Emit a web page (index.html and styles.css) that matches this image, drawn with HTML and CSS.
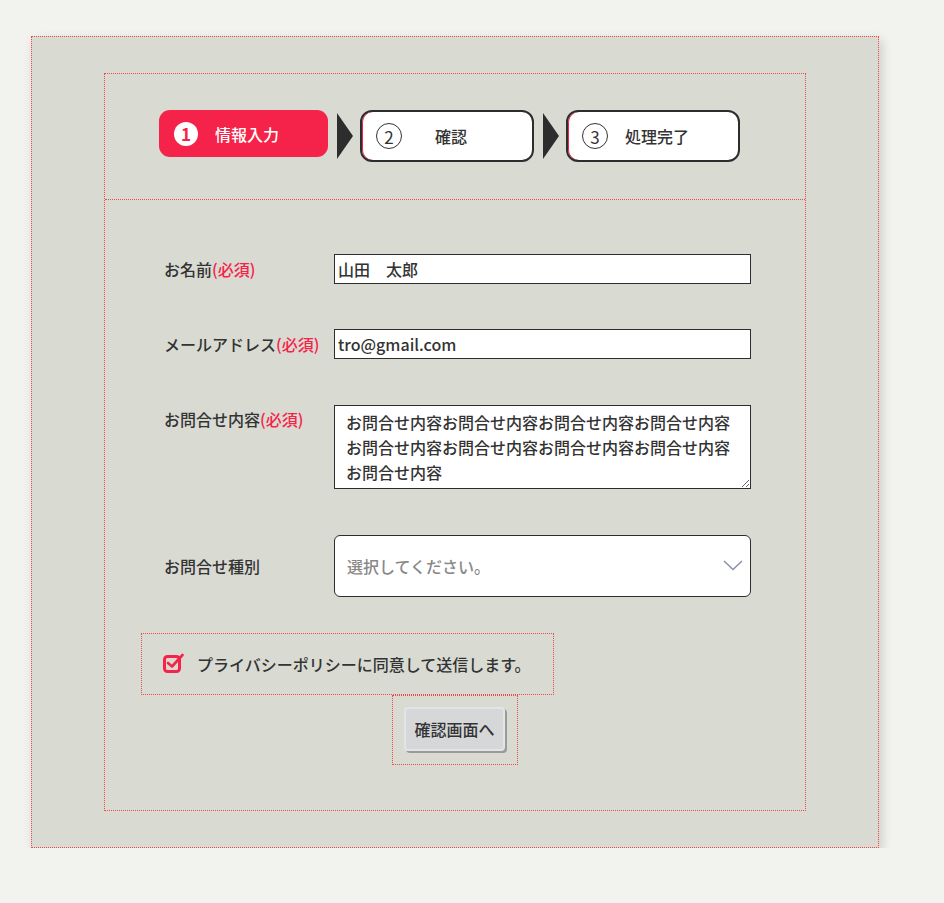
FILE: index.html
```html
<!DOCTYPE html>
<html lang="ja">
<head>
    <meta charset="UTF-8">
    <meta name="viewport" content="width=device-width, initial-scale=1.0">
    <title>お問合せ</title>
    <link rel="stylesheet" href="styles.css">
</head>
<body>
    <div class="page">
        <div class="contact">
            <div class="steps">
                <div class="step step-current">
                    <span class="step-num">1</span>
                    <span class="step-name">情報入力</span>
                </div>
                <span class="step-arrow"></span>
                <div class="step">
                    <span class="step-num">2</span>
                    <span class="step-name">確認</span>
                </div>
                <span class="step-arrow"></span>
                <div class="step">
                    <span class="step-num">3</span>
                    <span class="step-name">処理完了</span>
                </div>
            </div>

            <form class="contact-form" id="contactForm">
                <div class="form-row">
                    <label class="form-label" for="name">お名前<span class="required">(必須)</span></label>
                    <input class="form-input" type="text" id="name" name="name" value="山田　太郎">
                </div>

                <div class="form-row">
                    <label class="form-label" for="email">メールアドレス<span class="required">(必須)</span></label>
                    <input class="form-input" type="email" id="email" name="email" value="tro@gmail.com">
                </div>

                <div class="form-row form-row-top">
                    <label class="form-label" for="message">お問合せ内容<span class="required">(必須)</span></label>
                    <textarea class="form-textarea" id="message" name="message">お問合せ内容お問合せ内容お問合せ内容お問合せ内容お問合せ内容お問合せ内容お問合せ内容お問合せ内容お問合せ内容</textarea>
                </div>

                <div class="form-row form-row-select">
                    <label class="form-label" for="type">お問合せ種別</label>
                    <div class="select-wrap">
                        <select class="form-select" id="type" name="type">
                            <option value="">選択してください。</option>
                            <option value="service">サービスについて</option>
                            <option value="recruit">採用について</option>
                            <option value="other">その他</option>
                        </select>
                        <svg class="select-arrow" width="20" height="11" viewBox="0 0 20 11">
                            <path d="M1 1 L10 9.5 L19 1" fill="none" stroke="#8b93aa" stroke-width="1.6"/>
                        </svg>
                    </div>
                </div>

                <label class="agree">
                    <input class="agree-input" type="checkbox" name="agree" checked>
                    <svg class="agree-icon" width="22" height="20" viewBox="0 0 22 20">
                        <rect x="1.5" y="3.5" width="15" height="15" rx="3" fill="none" stroke="#f52349" stroke-width="3"/>
                        <path d="M5 10 L9 13.5 L19.5 2" fill="none" stroke="#f52349" stroke-width="2.6" stroke-linecap="round" stroke-linejoin="round"/>
                    </svg>
                    <span>プライバシーポリシーに同意して送信します。</span>
                </label>

                <div class="submit-area">
                    <button type="submit" class="btn-confirm">確認画面へ</button>
                </div>
            </form>
        </div>
    </div>

    <script>
        document.getElementById('contactForm').addEventListener('submit', function(event) {
            event.preventDefault();
        });
    </script>
</body>
</html>
```

FILE: styles.css
```css
:root {
    --accent: #f52349;
    --text: #333;
    --frame: #2d2d2d;
    --guide: #ee4a4a;
    --panel: #d9dbd3;
}

body {
    margin: 0;
    background-color: #f2f3ef;
    font-family: "Noto Sans CJK JP", "Noto Sans", sans-serif;
    font-size: 16px;
    color: var(--text);
}

.page {
    box-sizing: border-box;
    width: 848px;
    margin: 36px 0 0 31px;
    padding: 36px 72px;
    background-color: var(--panel);
    border: 1px dotted var(--guide);
    box-shadow: 3px 4px 10px rgba(0, 0, 0, 0.16);
}

.contact {
    border: 1px dotted var(--guide);
}

/* step indicator */
.steps {
    display: flex;
    align-items: flex-start;
    padding: 36px 0 37px 54px;
    border-bottom: 1px dotted var(--guide);
}

.step {
    box-sizing: border-box;
    display: flex;
    align-items: center;
    width: 174px;
    height: 52px;
    padding-left: 14px;
    background-color: #fff;
    border: 2px solid var(--frame);
    border-radius: 12px;
    box-shadow: inset 1px 0 0 var(--accent);
}

.step-num {
    display: flex;
    align-items: center;
    justify-content: center;
    width: 24px;
    height: 24px;
    border: 1px solid var(--text);
    border-radius: 50%;
    font-size: 17px;
    line-height: 1;
}

.step-name {
    width: 98px;
    text-align: center;
    font-weight: 500;
}

.step-current {
    width: 169px;
    height: 47px;
    padding-left: 15px;
    background-color: var(--accent);
    border: none;
    border-radius: 11px;
    box-shadow: none;
    color: #fff;
}

.step-current .step-num {
    border: none;
    background-color: #fff;
    color: var(--accent);
    font-weight: 700;
}

.step-arrow {
    width: 0;
    height: 0;
    margin: 3px 7px 0 9px;
    border-left: 16px solid var(--frame);
    border-top: 23px solid transparent;
    border-bottom: 23px solid transparent;
}

/* form */
.contact-form {
    padding: 54px 0 45px;
}

.form-row {
    display: flex;
    align-items: center;
    padding-left: 59px;
    margin-bottom: 46px;
}

.form-row:first-child {
    margin-bottom: 45px;
}

.form-row-top {
    align-items: flex-start;
}

.form-row-top .form-label {
    padding-top: 2px;
}

.form-row-select {
    margin-bottom: 36px;
}

.form-label {
    width: 170px;
    flex-shrink: 0;
    line-height: 24px;
    font-weight: 500;
}

.required {
    color: var(--accent);
}

.form-input,
.form-textarea,
.form-select {
    box-sizing: border-box;
    width: 417px;
    margin: 0;
    border: 1px solid var(--frame);
    border-radius: 0;
    background-color: #fff;
    font-family: inherit;
    font-size: 16px;
    font-weight: 500;
    color: var(--text);
}

.form-input {
    height: 30px;
    padding: 0 3px;
}

.form-input:focus,
.form-textarea:focus,
.form-select:focus {
    outline: none;
    border-color: var(--accent);
}

.form-textarea {
    display: block;
    height: 84px;
    padding: 4px 11px;
    line-height: 25px;
}

.select-wrap {
    position: relative;
}

.form-select {
    display: block;
    height: 62px;
    padding: 0 40px 0 12px;
    border-radius: 6px;
    appearance: none;
    -webkit-appearance: none;
    color: #888;
    cursor: pointer;
}

.select-arrow {
    position: absolute;
    right: 8px;
    top: 25px;
    pointer-events: none;
}

.agree {
    box-sizing: border-box;
    display: flex;
    align-items: center;
    gap: 12px;
    width: 413px;
    height: 62px;
    margin-left: 36px;
    padding-left: 21px;
    border: 1px dotted var(--guide);
    font-weight: 500;
    cursor: pointer;
}

.agree-input {
    display: none;
}

.agree-icon {
    margin-top: -2px;
}

.submit-area {
    box-sizing: border-box;
    width: 126px;
    height: 70px;
    margin: 0 auto;
    padding: 11px 0 0 11px;
    border: 1px dotted var(--guide);
}

.btn-confirm {
    box-sizing: border-box;
    width: 101px;
    height: 44px;
    padding: 0;
    background-color: #d6d7d9;
    border: 2px solid #e3e4e5;
    border-radius: 4px;
    box-shadow: 2px 2px 0 #9a9a9a;
    font-family: inherit;
    font-size: 16px;
    font-weight: 500;
    color: var(--text);
    cursor: pointer;
}

.btn-confirm:hover {
    background-color: #cfd0d2;
}
```
